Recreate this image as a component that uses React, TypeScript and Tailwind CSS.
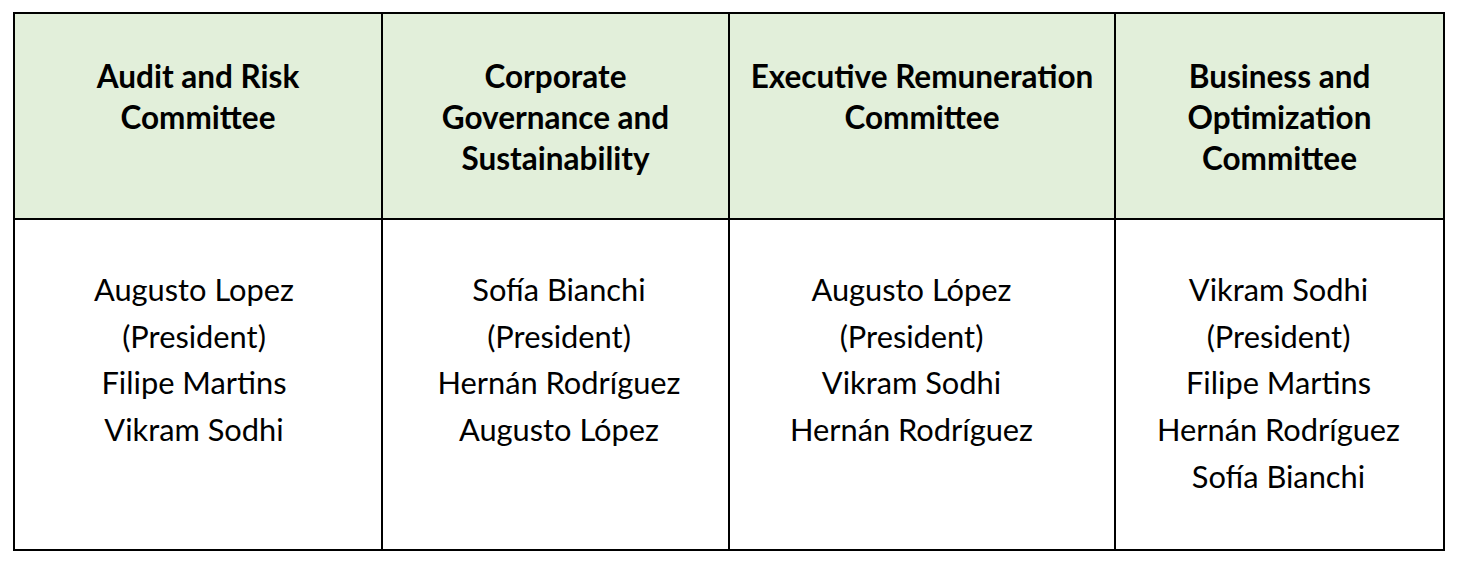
const committees = [
  {
    title: ["Audit and Risk", "Committee"],
    members: ["Augusto Lopez", "(President)", "Filipe Martins", "Vikram Sodhi"],
    shift: "pr-[8px]",
  },
  {
    title: ["Corporate", "Governance and", "Sustainability"],
    members: ["Sofía Bianchi", "(President)", "Hernán Rodríguez", "Augusto López"],
    shift: "pl-[7px]",
  },
  {
    title: ["Executive Remuneration", "Committee"],
    members: ["Augusto López", "(President)", "Vikram Sodhi", "Hernán Rodríguez"],
    shift: "pr-[21px]",
  },
  {
    title: ["Business and", "Optimization", "Committee"],
    members: ["Vikram Sodhi", "(President)", "Filipe Martins", "Hernán Rodríguez", "Sofía Bianchi"],
    shift: "pr-[2px]",
  },
];

export default function App() {
  return (
    <div className="w-[1460px] h-[566px] bg-white pl-[13px] pt-[12px]" style={{ fontFamily: "Lato, 'Open Sans', sans-serif" }}>
      <div className="grid grid-cols-[366px_345px_384px_327px] grid-rows-[204px_329px] gap-[2px] p-[2px] bg-black w-[1432px] text-black">
        {committees.map((c, i) => (
          <div key={"h" + i} className="bg-[#e2efda] pt-[42px] text-center font-bold text-[31.5px] leading-[41px]">
            {c.title.map((t) => (
              <div key={t}>{t}</div>
            ))}
          </div>
        ))}
        {committees.map((c, i) => (
          <div key={"b" + i} className={"bg-white pt-[47px] text-center text-[30.8px] leading-[46.7px] " + c.shift}>
            {c.members.map((m, j) => (
              <div key={j}>{m}</div>
            ))}
          </div>
        ))}
      </div>
    </div>
  );
}
